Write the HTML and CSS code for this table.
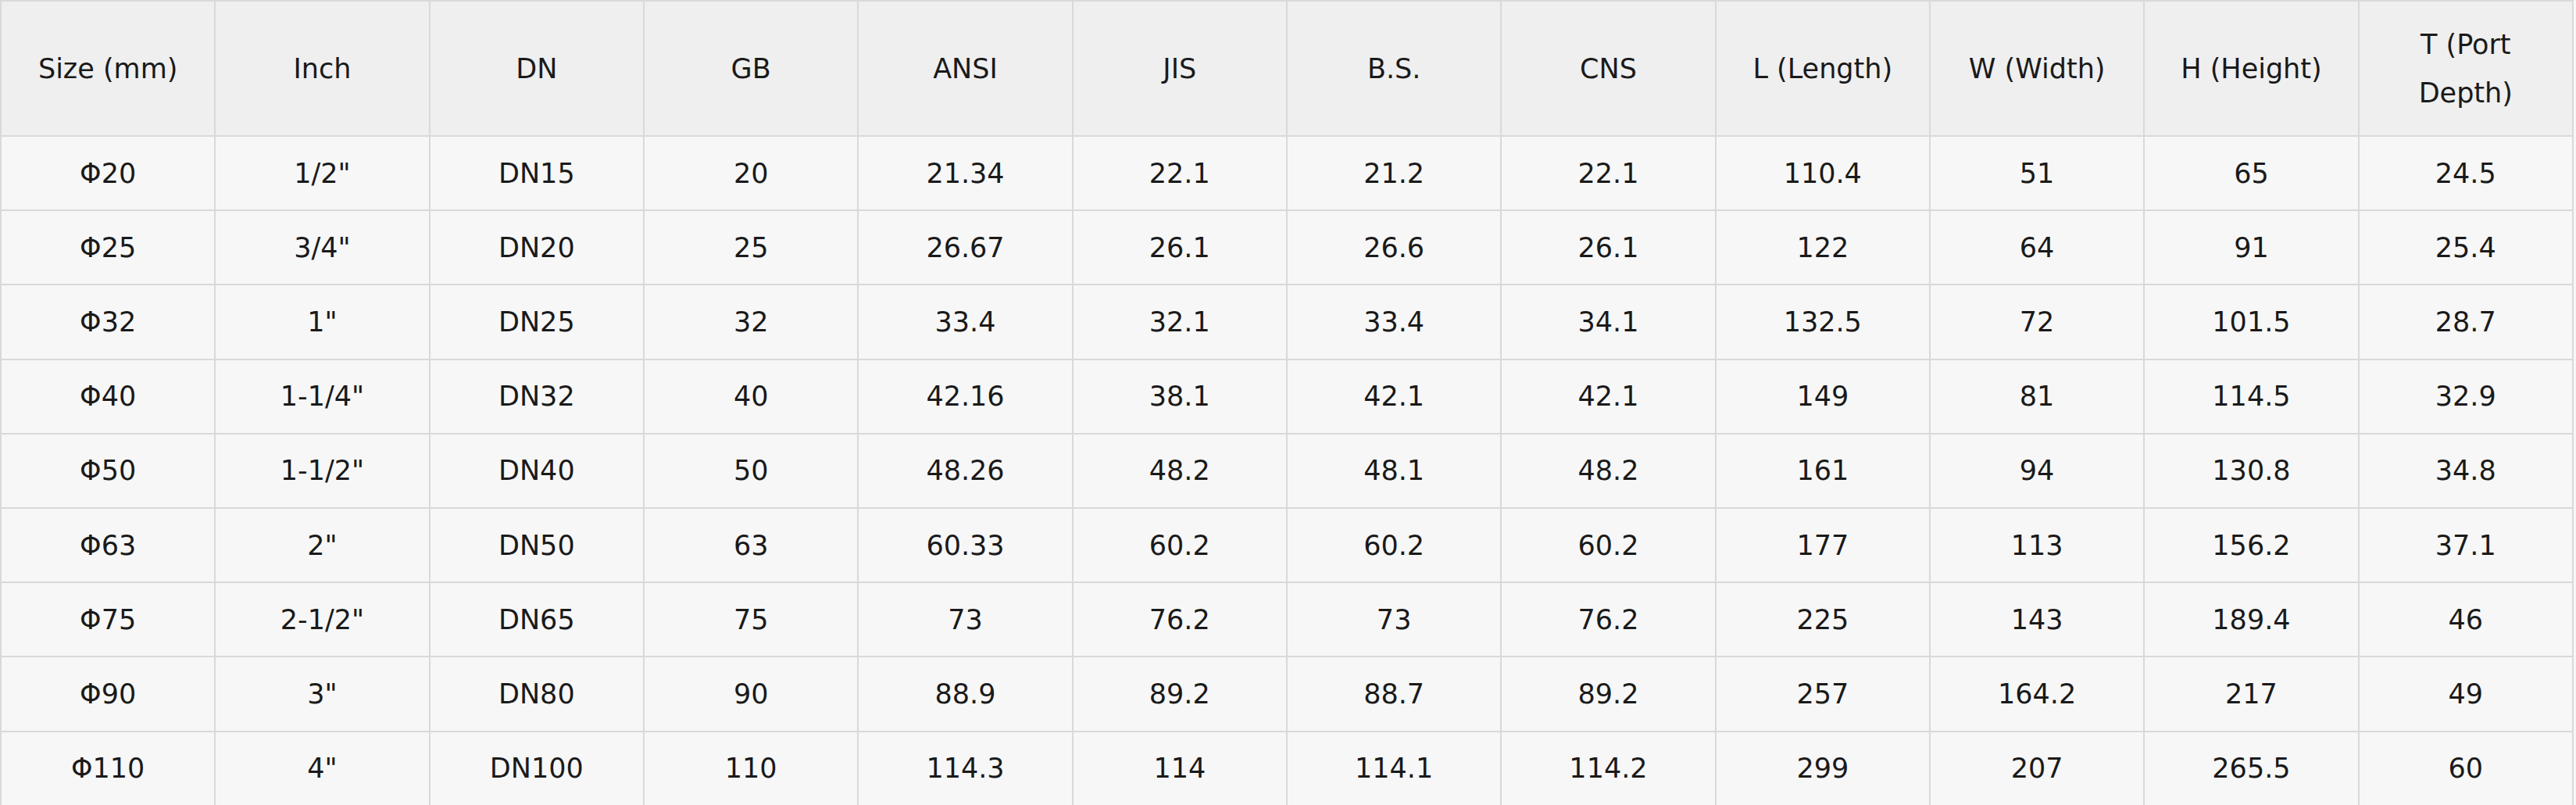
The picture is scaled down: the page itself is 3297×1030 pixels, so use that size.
FILE: index.html
```html
<!DOCTYPE html>
<html>
<head>
<meta charset="utf-8">
<link rel="stylesheet" href="styles.css">
</head>
<body>
<table class="spec">
<thead>
<tr><th>Size (mm)</th><th>Inch</th><th>DN</th><th>GB</th><th>ANSI</th><th>JIS</th><th>B.S.</th><th>CNS</th><th>L (Length)</th><th>W (Width)</th><th>H (Height)</th><th>T (Port Depth)</th></tr>
</thead>
<tbody>
<tr><td>Φ20</td><td>1/2"</td><td>DN15</td><td>20</td><td>21.34</td><td>22.1</td><td>21.2</td><td>22.1</td><td>110.4</td><td>51</td><td>65</td><td>24.5</td></tr>
<tr><td>Φ25</td><td>3/4"</td><td>DN20</td><td>25</td><td>26.67</td><td>26.1</td><td>26.6</td><td>26.1</td><td>122</td><td>64</td><td>91</td><td>25.4</td></tr>
<tr><td>Φ32</td><td>1"</td><td>DN25</td><td>32</td><td>33.4</td><td>32.1</td><td>33.4</td><td>34.1</td><td>132.5</td><td>72</td><td>101.5</td><td>28.7</td></tr>
<tr><td>Φ40</td><td>1-1/4"</td><td>DN32</td><td>40</td><td>42.16</td><td>38.1</td><td>42.1</td><td>42.1</td><td>149</td><td>81</td><td>114.5</td><td>32.9</td></tr>
<tr><td>Φ50</td><td>1-1/2"</td><td>DN40</td><td>50</td><td>48.26</td><td>48.2</td><td>48.1</td><td>48.2</td><td>161</td><td>94</td><td>130.8</td><td>34.8</td></tr>
<tr><td>Φ63</td><td>2"</td><td>DN50</td><td>63</td><td>60.33</td><td>60.2</td><td>60.2</td><td>60.2</td><td>177</td><td>113</td><td>156.2</td><td>37.1</td></tr>
<tr><td>Φ75</td><td>2-1/2"</td><td>DN65</td><td>75</td><td>73</td><td>76.2</td><td>73</td><td>76.2</td><td>225</td><td>143</td><td>189.4</td><td>46</td></tr>
<tr><td>Φ90</td><td>3"</td><td>DN80</td><td>90</td><td>88.9</td><td>89.2</td><td>88.7</td><td>89.2</td><td>257</td><td>164.2</td><td>217</td><td>49</td></tr>
<tr><td>Φ110</td><td>4"</td><td>DN100</td><td>110</td><td>114.3</td><td>114</td><td>114.1</td><td>114.2</td><td>299</td><td>207</td><td>265.5</td><td>60</td></tr>
</tbody>
</table>
</body>
</html>
```
FILE: styles.css
```css
html, body {
  margin: 0;
  padding: 0;
  background: #f7f7f7;
}
.spec {
  width: 3294px;
  border-collapse: collapse;
  table-layout: fixed;
  font-family: "DejaVu Sans", sans-serif;
  font-size: 35px;
  color: #1a1a1a;
}
.spec th, .spec td {
  border: 2px solid #d9d9d9;
  text-align: center;
  vertical-align: middle;
  font-weight: normal;
  padding: 0 20px;
}
.spec th {
  background: #efefef;
  height: 171px;
  line-height: 62px;
}
.spec td {
  background: #f7f7f7;
  height: 93.2px;
  line-height: 40px;
}
```
